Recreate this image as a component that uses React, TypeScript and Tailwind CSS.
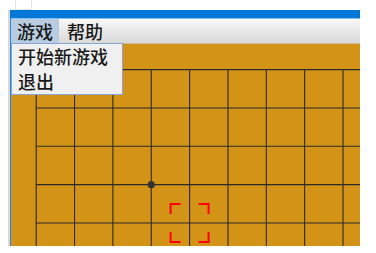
import React from "react"

const STEP = 38.35
const X0 = 25.2
const Y0 = 25.6

function Board() {
    const xs = [...Array(10).keys()].map((i) => X0 + i * STEP)
    const ys = [...Array(6).keys()].map((i) => Y0 + i * STEP)
    const cx = X0 + 4 * STEP
    const cy = Y0 + 4 * STEP
    const h = 20
    const a = 11
    return (
        <svg width="349" height="202" className="block">
            {xs.map((x) => (
                <line key={"v" + x} x1={x} y1={Y0} x2={x} y2={202} stroke="#2a2a2a" strokeWidth={1.1} />
            ))}
            {ys.map((y) => (
                <line key={"h" + y} x1={X0} y1={y} x2={349} y2={y} stroke="#2a2a2a" strokeWidth={1.1} />
            ))}
            <circle cx={X0 + 3 * STEP} cy={Y0 + 3 * STEP} r={3.6} fill="#333" />
            {/* red selection marks */}
            <g stroke="#ff0000" strokeWidth={2} fill="none">
                <polyline points={`${cx - h + 1},${cy - h + a} ${cx - h + 1},${cy - h + 1} ${cx - h + a},${cy - h + 1}`} />
                <polyline points={`${cx + h - a},${cy - h + 1} ${cx + h - 1},${cy - h + 1} ${cx + h - 1},${cy - h + a}`} />
                <polyline points={`${cx - h + 1},${cy + h - a} ${cx - h + 1},${cy + h - 1} ${cx - h + a},${cy + h - 1}`} />
                <polyline points={`${cx + h - a},${cy + h - 1} ${cx + h - 1},${cy + h - 1} ${cx + h - 1},${cy + h - a}`} />
            </g>
        </svg>
    )
}

export default function App() {
    return (
        <div className="w-[376px] h-[253px] bg-white relative overflow-hidden font-['Noto_Sans_CJK_SC',sans-serif] font-medium text-[#1a1a1a]">
            <div className="h-[10px] pl-[15px]">
                <div className="w-[17px] h-[10px] border border-t-0 border-[#e4e4e4]" />
            </div>
            <div className="ml-[8px] w-[352px] h-[236px] border-l-2 border-[#d8d8d8] flex flex-col">
                <div className="h-[8px] bg-[#0078d7]" />
                <div className="flex-1 flex flex-col border-l border-[#1e88e5]">
                    <div className="h-[1px] bg-[#8cc0ec]" />
                    <div className="h-[24px] flex bg-gradient-to-b from-[#f8f8f8] to-[#d9d9d9] text-[18px] leading-[24px]">
                        <div className="px-[6px] bg-[#b9cce2]">游戏</div>
                        <div className="px-[6px] ml-[2px]">帮助</div>
                    </div>
                    <div className="h-[1px] bg-[#cbbd9c]" />
                    <div className="flex-1 bg-[#d39316]">
                        <Board />
                    </div>
                </div>
            </div>
            <div className="absolute left-[11px] top-[43px] w-[112px] h-[52px] border border-[#86a7d6] bg-[#f0f0f0] text-[18px]">
                <div className="h-[25px] leading-[25px] pl-[6px]">开始新游戏</div>
                <div className="h-[25px] leading-[25px] pl-[6px]">退出</div>
            </div>
        </div>
    )
}
